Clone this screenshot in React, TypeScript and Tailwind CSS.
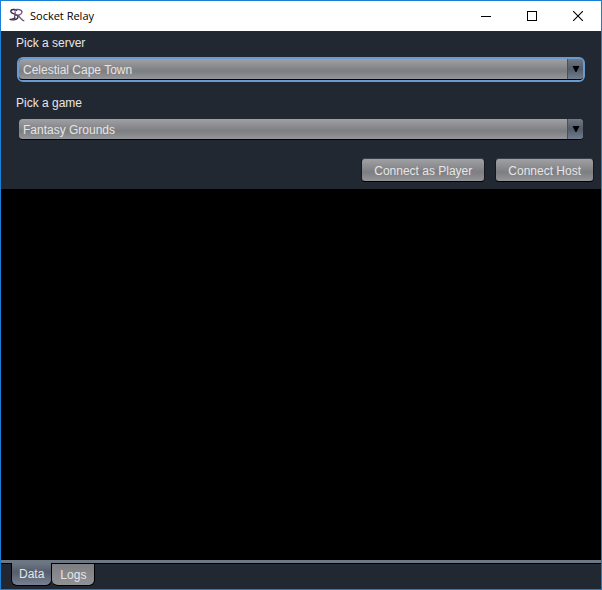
import { useState } from "react";

type PickerProps = {
  id: string;
  label: string;
  options: string[];
  focused?: boolean;
};

function Picker({ id, label, options, focused = false }: PickerProps) {
  return (
    <div className="flex flex-col gap-1.5">
      <label htmlFor={id} className="text-xs leading-4 text-[#e6e6e6]">
        {label}
      </label>
      <div
        className={
          focused
            ? "ml-px rounded-md border-2 border-[#6a9bd0] bg-black"
            : "ml-px rounded-md border-2 border-transparent"
        }
      >
        <div className="relative flex h-[21px] overflow-hidden rounded border-b border-black">
          <select
            id={id}
            className="w-full appearance-none bg-linear-to-b from-[#a1a1a4] via-[#7d7e82] via-60% to-[#95969a] pt-0.5 pl-1 text-xs text-[#e6e6e6] outline-none"
          >
            {options.map((o) => (
              <option key={o}>{o}</option>
            ))}
          </select>
          <span className="pointer-events-none absolute inset-y-0 right-0 flex w-4 items-center justify-center border-l border-[#4a5059] bg-linear-to-b from-[#717886] via-[#525c6b] via-50% to-[#717d8d]">
            <svg width="8" height="6" viewBox="0 0 8 6" aria-hidden="true">
              <path d="M0.5 0H7.5L4.5 6H3.5Z" fill="#000" />
            </svg>
          </span>
        </div>
      </div>
    </div>
  );
}

function ActionButton({ children }: { children: string }) {
  return (
    <button className="h-6 rounded border border-t-[#3b4048] border-r-[#15191f] border-b-black border-l-[#15191f] bg-linear-to-b from-[#a1a1a4] via-[#7d7e82] via-60% to-[#95969a] px-3 pt-px text-xs text-[#e6e6e6]">
      {children}
    </button>
  );
}

function Logo() {
  return (
    <svg width="16" height="16" viewBox="0 0 16 16" fill="none" aria-hidden="true">
      <path
        d="M8 2.7C6.5 0.9 1.7 1 1.8 3.6C2 6 8.5 5.6 9 8.6C9.3 11.6 3.4 12.7 0.6 11.2"
        stroke="#34303f"
        strokeWidth="1.4"
      />
      <path
        d="M5 2.3C8 0.8 13.3 1.2 13 4.3C12.8 6.8 9 7.5 6.2 7.2M9.2 7.2C11 9.8 12.5 12.2 15.3 13M6.3 3.3L5.5 10"
        stroke="#704a80"
        strokeWidth="1.3"
      />
      <path d="M1 11.7L6.5 9.9" stroke="#34303f" strokeWidth="1.2" />
    </svg>
  );
}

export default function App() {
  const [tab, setTab] = useState("Data");
  const windowButton = "flex w-[46px] items-center justify-center";
  return (
    <div className="flex h-screen flex-col border border-[#1a7fd6] bg-[#222831] font-['Liberation_Sans',Arial,sans-serif]">
      <header className="flex h-[30px] shrink-0 items-stretch bg-white pl-2 text-black">
        <div className="flex flex-1 items-center gap-[5px]">
          <Logo />
          <h1 className="font-['Open_Sans',sans-serif] text-[11px]">Socket Relay</h1>
        </div>
        <button aria-label="Minimize" className={windowButton}>
          <svg width="10" height="11" viewBox="0 0 10 11" shapeRendering="crispEdges">
            <path d="M0 5.5H10" stroke="#000" />
          </svg>
        </button>
        <button aria-label="Maximize" className={windowButton}>
          <svg width="10" height="10" viewBox="0 0 10 10" shapeRendering="crispEdges">
            <path d="M.5 .5H9.5V9.5H.5Z" fill="none" stroke="#000" />
          </svg>
        </button>
        <button aria-label="Close" className={windowButton}>
          <svg width="10" height="10" viewBox="0 0 10 10">
            <path d="M0 0L10 10M10 0L0 10" stroke="#000" strokeWidth="1.1" />
          </svg>
        </button>
      </header>

      <section className="shrink-0 pt-1 pb-[7px]">
        <div className="flex flex-col gap-[13px] pr-4 pl-[15px]">
          <Picker id="server" label="Pick a server" options={["Celestial Cape Town"]} focused />
          <Picker id="game" label="Pick a game" options={["Fantasy Grounds"]} />
        </div>
        <div className="flex justify-end gap-2.5 pt-4 pr-[7px]">
          <ActionButton>Connect as Player</ActionButton>
          <ActionButton>Connect Host</ActionButton>
        </div>
      </section>

      <main className="min-h-0 flex-1 bg-black" />

      <footer className="shrink-0">
        <div className="h-[3px] bg-[#6d7683]" />
        <div role="tablist" className="flex h-[26px] items-start border-t border-black pl-2.5">
          {["Data", "Logs"].map((name) => (
            <button
              key={name}
              role="tab"
              aria-selected={tab === name}
              onClick={() => setTab(name)}
              className={
                tab === name
                  ? "-mt-px h-[23px] rounded-b-md border-x border-b border-black bg-linear-to-b from-[#6d7683] via-[#535d6c] via-40% to-[#778191] px-[7px] text-xs text-[#e6e6e6]"
                  : "-mt-px h-[23px] rounded-b-md border-t border-r border-b border-black bg-linear-to-b from-[#7d7e82] to-[#919296] px-2 text-xs text-[#e6e6e6]"
              }
            >
              {name}
            </button>
          ))}
        </div>
      </footer>
    </div>
  );
}
